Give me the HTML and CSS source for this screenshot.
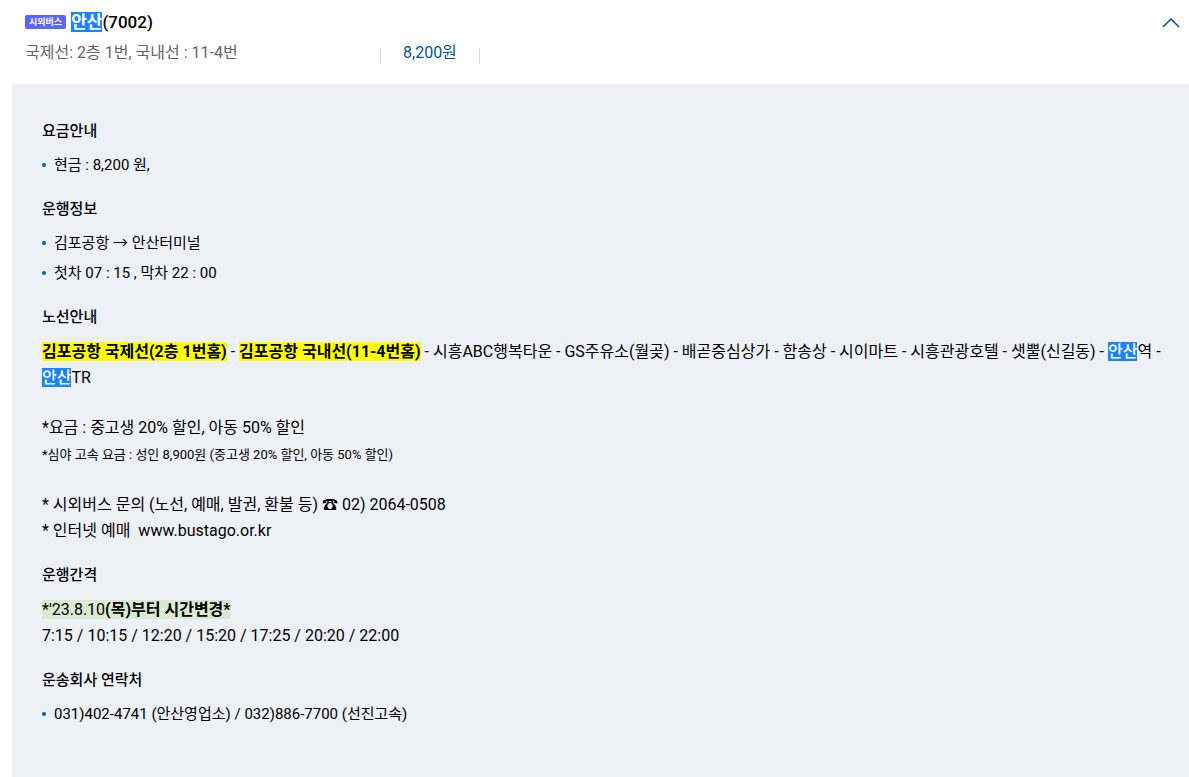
FILE: index.html
```
<!DOCTYPE html>
<html lang="ko">
<head>
<meta charset="utf-8">
<meta name="viewport" content="width=device-width, initial-scale=1">
<title>안산(7002)</title>
<link rel="stylesheet" href="styles.css">
</head>
<body>
<header class="route">
  <div class="route-main">
    <h2 class="route-title"><span class="badge">시외버스</span><span><mark class="match">안산</mark>(7002)</span></h2>
    <div class="route-meta">
      <span class="route-stop">국제선: 2층 1번, 국내선 : 11-4번</span>
      <span class="route-fare">8,200원</span>
    </div>
  </div>
  <button class="toggle" type="button" aria-label="접기" aria-expanded="true">
    <svg width="18" height="10" viewBox="0 0 18 10" fill="none" stroke="#00549c" stroke-width="1.5" aria-hidden="true"><path d="M1 9 9 1l8 8"/></svg>
  </button>
</header>
<main class="panel">
  <section>
    <h3 class="heading">요금안내</h3>
    <ul class="list"><li>현금 : 8,200 원,</li></ul>
  </section>
  <section>
    <h3 class="heading">운행정보</h3>
    <ul class="list">
      <li>김포공항 → 안산터미널</li>
      <li>첫차 07 : 15 , 막차 22 : 00</li>
    </ul>
  </section>
  <section>
    <h3 class="heading">노선안내</h3>
    <div class="rich">
      <p><b class="yellow">김포공항 국제선(2층 1번홈)</b> - <b class="yellow">김포공항 국내선(11-4번홈)</b> - 시흥ABC행복타운 - GS주유소(월곶) - 배곧중심상가 - 함송상 - 시이마트 - 시흥관광호텔 - 샛뿔(신길동) - <mark class="match">안산</mark>역 - <mark class="match">안산</mark>TR</p>
      <p>*요금 : 중고생 20% 할인, 아동 50% 할인<br><span class="small">*심야 고속 요금 : 성인 8,900원 (중고생 20% 할인, 아동 50% 할인)</span></p>
      <p>* 시외버스 문의 (노선, 예매, 발권, 환불 등) ☎ 02) 2064-0508<br>* 인터넷 예매 &nbsp;www.bustago.or.kr</p>
    </div>
  </section>
  <section>
    <h3 class="heading">운행간격</h3>
    <div class="rich">
      <p><span class="green">*'23.8.10<b>(목)부터 시간변경*</b></span><br>7:15 / 10:15 / 12:20 / 15:20 / 17:25 / 20:20 / 22:00</p>
    </div>
  </section>
  <section>
    <h3 class="heading">운송회사 연락처</h3>
    <ul class="list"><li>031)402-4741 (안산영업소) / 032)886-7700 (선진고속)</li></ul>
  </section>
</main>
</body>
</html>
```
FILE: styles.css
```
* { box-sizing: border-box; }
body {
  margin: 0;
  min-height: 100vh;
  display: flex;
  flex-direction: column;
  background: #fff;
  color: #000;
  font: 16px/26px Roboto, "Noto Sans CJK KR", sans-serif;
}
h2, h3, p, ul { margin: 0; padding: 0; }
.route {
  display: flex;
  justify-content: space-between;
  align-items: flex-start;
  padding: 8px 9px 14px 25px;
}
.route-main { flex: 1; }
.route-title {
  display: flex;
  align-items: center;
  gap: 5px;
  font-size: 17px;
  font-weight: 500;
  line-height: 28px;
}
.badge {
  padding: 0 4px;
  border-radius: 2px;
  background: #5a64ff;
  color: #fff;
  font-size: 9px;
  font-weight: 700;
  line-height: 14px;
}
.match { background: #1a83ff; color: #fff; font-weight: 500; }
.route-title .match { font-weight: 700; }
.route-meta {
  display: flex;
  line-height: 34px;
}
.route-stop { width: 355px; color: #666; }
.route-fare {
  padding: 0 23px;
  color: #00549c;
  background:
    linear-gradient(#d8dce2, #d8dce2) left 12px / 1px 16px no-repeat,
    linear-gradient(#d8dce2, #d8dce2) right 12px / 1px 16px no-repeat;
}
.toggle {
  display: flex;
  padding: 10px 0;
  border: 0;
  background: none;
  cursor: pointer;
}
.panel {
  flex: 1;
  display: flex;
  flex-direction: column;
  gap: 17px;
  margin-left: 12px;
  padding: 35px 20px 34px 30px;
  background: #edf1f6;
}
.heading {
  margin-bottom: 7px;
  font-size: 15px;
  font-weight: 500;
  line-height: 24px;
}
.list { list-style: none; font-size: 15px; line-height: 30px; }
.list li { display: flex; align-items: center; gap: 8px; }
.list li::before {
  content: "";
  width: 4px;
  height: 4px;
  border-radius: 50%;
  background: #0060ae;
}
.rich {
  display: flex;
  flex-direction: column;
  gap: 24px;
  padding: 3px 0 2px;
}
.yellow { background: #ff0; }
.green { background: #d9ead3; }
.small { font-size: 13px; }
```
